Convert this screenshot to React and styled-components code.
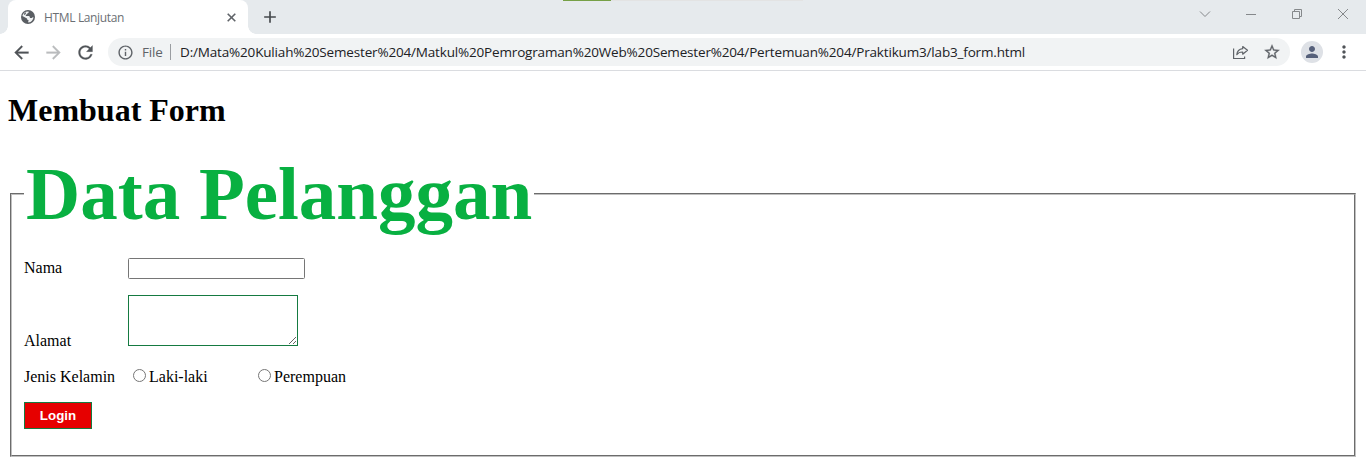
import React from "react";
import styled, { createGlobalStyle } from "styled-components";
import {
  MdAdd,
  MdArrowBack,
  MdArrowForward,
  MdInfoOutline,
  MdMoreVert,
  MdPerson,
  MdRefresh,
  MdStarBorder,
} from "react-icons/md";

const GlobalStyle = createGlobalStyle`
  *, *::before, *::after { box-sizing: border-box; }
  body { margin: 0; background: #fff; overflow: hidden; }
`;

const uiFont = `"Open Sans", "Noto Sans", sans-serif`;
const pageFont = `"Liberation Serif", "Times New Roman", serif`;

const Window = styled.div`
  width: 1366px;
  height: 476px;
  display: flex;
  flex-direction: column;
`;

const TabStrip = styled.div`
  position: relative;
  height: 34px;
  flex: none;
  display: flex;
  padding-left: 8px;
  background: #e6eaed;
`;

const TopProgress = styled.div`
  position: absolute;
  top: 0;
  left: 563px;
  width: 240px;
  height: 1px;
  background: linear-gradient(to right, #76a046 48px, #e3e3e3 48px);
`;

const Tab = styled.div`
  position: relative;
  width: 240px;
  height: 34px;
  display: flex;
  align-items: center;
  padding: 0 12px 0 13px;
  background: #fff;
  border-radius: 8px 8px 0 0;
  color: #5f6368;
  &::before,
  &::after {
    content: "";
    position: absolute;
    bottom: 0;
    width: 8px;
    height: 8px;
  }
  &::before {
    left: -8px;
    background: radial-gradient(circle at 0 0, #e6eaed 7.5px, #fff 8px);
  }
  &::after {
    right: -8px;
    background: radial-gradient(circle at 100% 0, #e6eaed 7.5px, #fff 8px);
  }
`;

const TabTitle = styled.span`
  flex: 1;
  margin-left: 9px;
  font: 12px/17px ${uiFont};
  letter-spacing: -0.35px;
  color: #6b6f74;
`;

const NewTab = styled.div`
  display: flex;
  align-items: center;
  margin-left: 12px;
  color: #46494d;
`;

const WindowControls = styled.div`
  display: flex;
  margin-left: auto;
  height: 28px;
`;

const ControlButton = styled.div`
  width: 46px;
  display: flex;
  align-items: center;
  justify-content: center;
  color: #85888b;
`;

const Toolbar = styled.div`
  height: 37px;
  flex: none;
  display: flex;
  align-items: center;
  padding: 0 11px 0 10px;
  border-bottom: 1px solid #dadce0;
  background: #fff;
`;

const NavButton = styled.div`
  width: 22px;
  height: 22px;
  margin-right: 10px;
  display: flex;
  align-items: center;
  justify-content: center;
  color: ${(p) => (p.$disabled ? "#babcbe" : "#505458")};
  path:not([fill="none"]) {
    stroke: currentColor;
    stroke-width: 0.3px;
  }
  path[fill="none"] {
    stroke: none;
  }
`;

const AddressBar = styled.div`
  width: 1182px;
  height: 28px;
  margin-left: 2px;
  display: flex;
  align-items: center;
  padding: 0 9px;
  border-radius: 14px;
  background: #f1f3f4;
  color: #5f6368;
  font: 13.5px/20px ${uiFont};
`;

const Scheme = styled.span`
  width: 28px;
  margin-left: 8px;
  letter-spacing: -0.2px;
`;

const Divider = styled.span`
  width: 1px;
  height: 16px;
  background: #9a9da1;
`;

const Url = styled.span`
  flex: 1;
  margin-left: 9px;
  color: #202124;
  letter-spacing: -0.17px;
  white-space: nowrap;
`;

const AddressAction = styled.span`
  display: flex;
  margin-left: 14px;
`;

const StarIcon = styled(MdStarBorder)`
  path:not([fill="none"]) {
    stroke: currentColor;
    stroke-width: 0.4px;
  }
  path[fill="none"] {
    stroke: none;
  }
`;

const Avatar = styled.div`
  width: 22px;
  height: 22px;
  margin-left: 11px;
  display: flex;
  align-items: center;
  justify-content: center;
  border-radius: 50%;
  background: #dee1e6;
  color: #56607a;
`;

const Menu = styled.div`
  display: flex;
  margin-left: 11px;
  color: #505458;
`;

const Page = styled.main`
  flex: 1;
  padding: 21px 8px 0;
  font: 16px/18px ${pageFont};
  color: #000;
`;

const Heading = styled.h1`
  margin: 0 0 22px;
  font-size: 32px;
  line-height: 37px;
  font-weight: bold;
`;

const Fieldset = styled.fieldset`
  height: 306px;
  margin: 0 2px;
  padding: 0 12px;
  border: 2px groove rgb(192, 192, 192);
`;

const Legend = styled.legend`
  height: 86px;
  padding: 0 2px;
  font-size: 75px;
  line-height: 86px;
  font-weight: bold;
  color: #08b041;
`;

const FormRow = styled.div`
  display: flex;
  align-items: ${(p) => p.$align || "center"};
  height: ${(p) => p.$height}px;
  margin-top: ${(p) => p.$top}px;
`;

const Label = styled.label`
  width: 104px;
`;

const NameLabel = styled(Label)`
  padding-top: 1px;
`;

const AreaLabel = styled(Label)`
  margin-bottom: -4px;
`;

const TextInput = styled.input`
  width: 177px;
  height: 21px;
  margin: 0;
  padding: 1px 2px;
  border: 1px solid #767676;
  border-radius: 1.5px;
  background: #fff;
`;

const TextArea = styled.textarea`
  width: 170px;
  height: 51px;
  margin: 0;
  padding: 2px;
  border: 1px solid #157a41;
  border-radius: 0;
  background: #fff;
  resize: both;
  overflow: auto;
`;

const RadioOption = styled.label`
  width: 125px;
  display: flex;
  align-items: center;
  gap: 3px;
`;

const RadioGroup = styled.div`
  display: flex;
  margin-left: 5px;
`;

const Radio = styled.input`
  width: 13px;
  height: 13px;
  margin: -3px 0 0;
`;

const LoginButton = styled.button`
  width: 68px;
  height: 27px;
  padding: 0;
  border: 1px solid #157a41;
  background: #e60000;
  color: #fff;
  font: bold 13.333px "Liberation Sans", Arial, sans-serif;
`;

const GlobeIcon = () => (
  <svg width="14" height="14" viewBox="0 0 14 14">
    <circle cx="7" cy="7" r="7" fill="#5a5e63" />
    <path
      d="M7.600 1.500c.3 1.100-.2 1.600-1.200 1.700-.1 1-.5 1.300-1.500 1.400.2.800.1 1.100-.5 1.300h3.200c.9 0 1.100.6 1.200 1.400.1.700.6.700 1.300.8.8.1 1.100-.4 1.500-.9h.9c-.2 2.600-2.200 4.900-4.900 5.300-.5-.2-.6-.9-.1-1.400.4-.5.1-.8-.4-1-.9-.3-1.100-.8-1.100-1.600L1.400 6c.4-2.500 2.800-4.700 6.200-4.500z"
      fill="#f1f3f4"
    />
    <path d="M3.200 3.400l1.400-1.100.5.800-.8 1.400-1.500.5z" fill="#5a5e63" />
  </svg>
);

const CloseTabIcon = () => (
  <svg width="9" height="9" viewBox="0 0 9 9" stroke="currentColor" strokeWidth="1.6">
    <path d="M.7.7l7.600 7.600M8.300.7L.7 8.300" />
  </svg>
);

const ShareIcon = () => (
  <svg width="16" height="16" viewBox="0 0 16 16" fill="none" stroke="currentColor" strokeWidth="1.2">
    <path d="M.6 4.500v10h11v-2" />
    <path d="M9.700 2.500l4.800 3.800-4.800 3.900V8C7 7.900 5.200 8.700 3.800 10.700c.3-3.300 2.300-5.600 5.900-6z" strokeLinejoin="round" />
  </svg>
);

const ChevronIcon = () => (
  <svg width="12" height="12" viewBox="0 0 12 12" fill="none" stroke="currentColor">
    <path d="M1 3.500l5 5 5-5" />
  </svg>
);

const MinimizeIcon = () => (
  <svg width="10" height="10" viewBox="0 0 10 10" stroke="currentColor">
    <path d="M0 5.500h10" />
  </svg>
);

const RestoreIcon = () => (
  <svg width="10" height="10" viewBox="0 0 10 10" fill="none" stroke="currentColor">
    <path d="M.5 2.500h7v7h-7zM2.500 2.500V.5h7v7h-2" />
  </svg>
);

const CloseWindowIcon = () => (
  <svg width="10" height="10" viewBox="0 0 10 10" stroke="currentColor">
    <path d="M0 0l10 10M10 0L0 10" />
  </svg>
);

export default function App() {
  return (
    <Window>
      <GlobalStyle />
      <TabStrip>
        <TopProgress />
        <Tab>
          <GlobeIcon />
          <TabTitle>HTML Lanjutan</TabTitle>
          <CloseTabIcon />
        </Tab>
        <NewTab>
          <MdAdd size={20} />
        </NewTab>
        <WindowControls>
          <ControlButton><ChevronIcon /></ControlButton>
          <ControlButton><MinimizeIcon /></ControlButton>
          <ControlButton><RestoreIcon /></ControlButton>
          <ControlButton><CloseWindowIcon /></ControlButton>
        </WindowControls>
      </TabStrip>
      <Toolbar>
        <NavButton><MdArrowBack size={21} /></NavButton>
        <NavButton $disabled><MdArrowForward size={21} /></NavButton>
        <NavButton><MdRefresh size={21} /></NavButton>
        <AddressBar>
          <MdInfoOutline size={17} />
          <Scheme>File</Scheme>
          <Divider />
          <Url>
            D:/Mata%20Kuliah%20Semester%204/Matkul%20Pemrograman%20Web%20Semester%204/Pertemuan%204/Praktikum3/lab3_form.html
          </Url>
          <AddressAction><ShareIcon /></AddressAction>
          <AddressAction><StarIcon size={18} /></AddressAction>
        </AddressBar>
        <Avatar><MdPerson size={18} /></Avatar>
        <Menu><MdMoreVert size={20} /></Menu>
      </Toolbar>
      <Page>
        <Heading>Membuat Form</Heading>
        <Fieldset>
          <Legend>Data Pelanggan</Legend>
          <FormRow $height={21} $top={21} $align="flex-start">
            <NameLabel htmlFor="nama">Nama</NameLabel>
            <TextInput id="nama" type="text" />
          </FormRow>
          <FormRow $height={51} $top={16} $align="flex-end">
            <AreaLabel htmlFor="alamat">Alamat</AreaLabel>
            <TextArea id="alamat" />
          </FormRow>
          <FormRow $height={18} $top={22}>
            <Label as="span">Jenis Kelamin</Label>
            <RadioGroup>
              <RadioOption><Radio type="radio" name="kelamin" />Laki-laki</RadioOption>
              <RadioOption><Radio type="radio" name="kelamin" />Perempuan</RadioOption>
            </RadioGroup>
          </FormRow>
          <FormRow $height={27} $top={16}>
            <LoginButton type="button">Login</LoginButton>
          </FormRow>
        </Fieldset>
      </Page>
    </Window>
  );
}
